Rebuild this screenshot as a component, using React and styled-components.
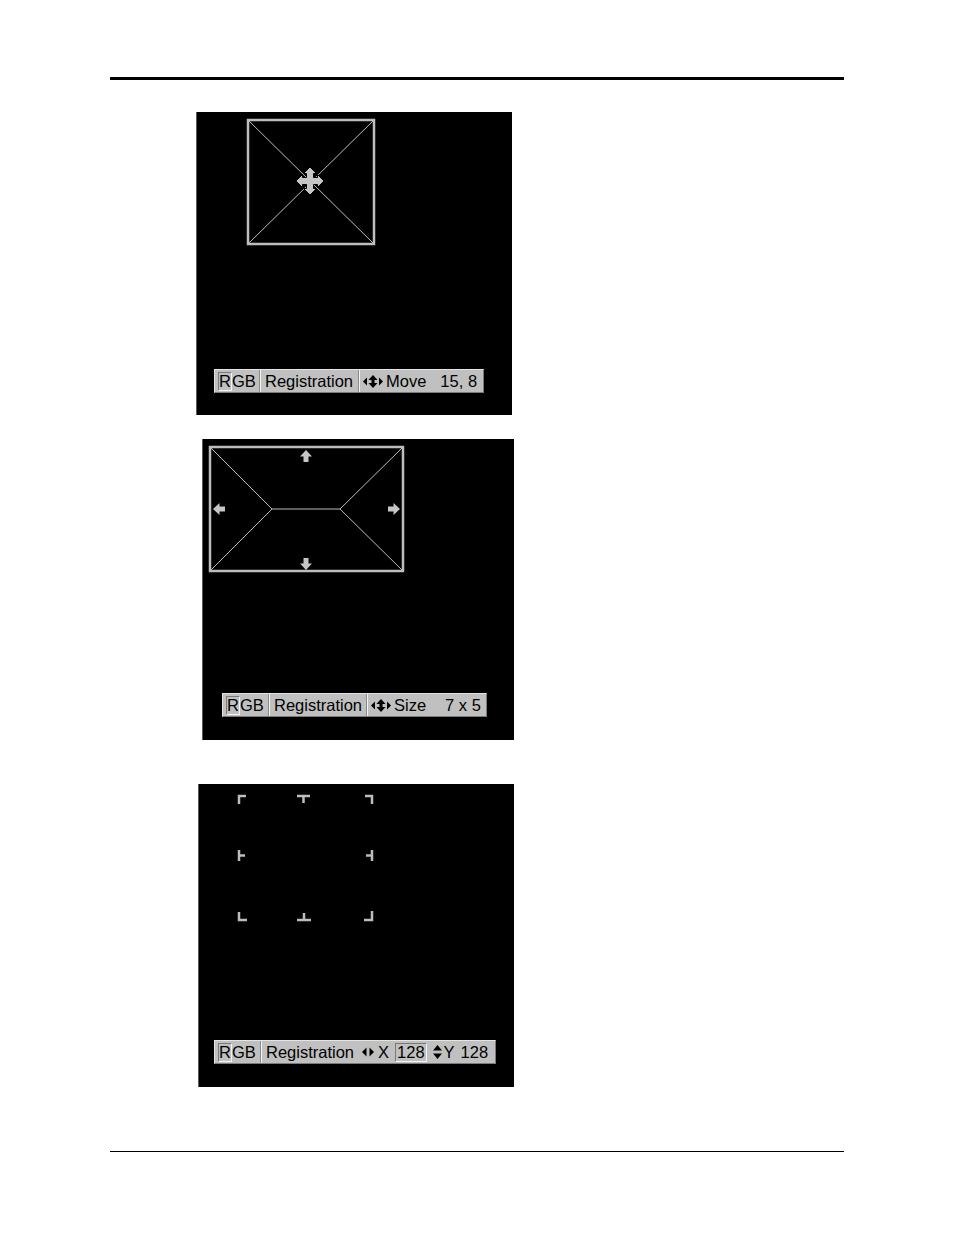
import React from "react";
import styled, { createGlobalStyle } from "styled-components";

const GlobalStyle = createGlobalStyle`
  html, body {
    margin: 0;
    padding: 0;
    background: #fff;
  }
  body {
    font-family: "Liberation Sans", Arial, sans-serif;
  }
`;

const Page = styled.div`
  width: 954px;
  min-height: 1235px;
  padding: 77px 0 0 110px;
  box-sizing: border-box;
`;

const Rule = styled.div`
  width: 734px;
  height: ${(p) => p.thick}px;
  background: #000;
  margin-top: ${(p) => p.top || 0}px;
`;

const Figures = styled.div`
  display: flex;
  flex-direction: column;
`;

const Panel = styled.div`
  width: ${(p) => p.w}px;
  height: ${(p) => p.h}px;
  margin-left: ${(p) => p.left}px;
  margin-top: ${(p) => p.top}px;
  background: #000;
  border-left: 1px solid #5a5a5a;
  box-sizing: border-box;
  display: flex;
  flex-direction: column;
`;

const Canvas = styled.svg`
  display: block;
  flex: none;
`;

const StatusBar = styled.div`
  display: flex;
  align-items: stretch;
  width: ${(p) => p.w}px;
  height: 24px;
  margin-left: ${(p) => p.left}px;
  box-sizing: border-box;
  background: #c0c0c0;
  border-top: 1px solid #e4e4e4;
  border-left: 1px solid #e4e4e4;
  border-bottom: 1px solid #7a7a7a;
  border-right: 1px solid #7a7a7a;
  font-size: 16.5px;
  color: #000;
  line-height: 1;
`;

const Cell = styled.div`
  display: flex;
  align-items: center;
  width: ${(p) => (p.w ? `${p.w}px` : "auto")};
  flex: ${(p) => (p.w ? "none" : "1")};
  padding-left: ${(p) => p.pad ?? 3}px;
  box-sizing: border-box;
  white-space: nowrap;
  border-right: ${(p) => (p.last ? "none" : "1px solid #8a8a8a")};
  box-shadow: ${(p) => (p.last ? "none" : "1px 0 0 #f4f4f4")};
  margin-right: ${(p) => (p.last ? 0 : 1)}px;
`;

const Sunken = styled.span`
  display: inline-flex;
  align-items: center;
  height: 17px;
  padding: 0 ${(p) => p.pad ?? 0}px;
  margin-left: ${(p) => p.gap || 0}px;
  border-top: 1px solid #7a7a7a;
  border-left: 1px solid #7a7a7a;
  border-bottom: 1px solid #f4f4f4;
  border-right: 1px solid #f4f4f4;
`;

const Text = styled.span`
  margin-left: ${(p) => p.gap || 0}px;
`;

const Glyph = styled.svg`
  display: block;
  flex: none;
  margin-left: ${(p) => p.gap || 0}px;
`;

const LINE = "#bdbdbd";

const ArrowsIcon = ({ gap }) => (
  <Glyph width={20} height={13} viewBox="0 0 20 13" gap={gap}>
    <polygon points="0,6.5 4,2.5 4,10.5" fill="#000" />
    <polygon points="20,6.5 16,2.5 16,10.5" fill="#000" />
    <polygon points="10,0 14.5,5 5.5,5" fill="#000" />
    <polygon points="10,13 14.5,8 5.5,8" fill="#000" />
    <rect x={8.5} y={5} width={3} height={3} fill="#000" />
  </Glyph>
);

const HArrowsIcon = ({ gap }) => (
  <Glyph width={12} height={10} viewBox="0 0 12 10" gap={gap}>
    <polygon points="0,5 4.5,0.5 4.5,9.5" fill="#000" />
    <polygon points="12,5 7.5,0.5 7.5,9.5" fill="#000" />
  </Glyph>
);

const VArrowsIcon = ({ gap }) => (
  <Glyph width={9} height={14} viewBox="0 0 9 14" gap={gap}>
    <polygon points="4.5,0 9,5.5 0,5.5" fill="#000" />
    <polygon points="4.5,14 9,8.5 0,8.5" fill="#000" />
  </Glyph>
);

const RgbCell = ({ w, pad }) => (
  <Cell w={w} pad={pad}>
    <Sunken>R</Sunken>
    <Text>GB</Text>
  </Cell>
);

const MoveCursor = ({ x, y }) => (
  <polygon
    transform={`translate(${x} ${y})`}
    points="0,-14 6.5,-7.5 3.5,-7.5 3.5,-3.5 7.5,-3.5 7.5,-6.5 14,0 7.5,6.5 7.5,3.5 3.5,3.5 3.5,7.5 6.5,7.5 0,14 -6.5,7.5 -3.5,7.5 -3.5,3.5 -7.5,3.5 -7.5,6.5 -14,0 -7.5,-6.5 -7.5,-3.5 -3.5,-3.5 -3.5,-7.5 -6.5,-7.5"
    fill="#c6c6c6"
    stroke="#000"
    strokeWidth="1"
  />
);

// small solid arrow, rotated to point up/right/down/left
const SideArrow = ({ x, y, rot }) => (
  <polygon
    transform={`translate(${x} ${y}) rotate(${rot})`}
    points="0,-6 6,0.5 2.5,0.5 2.5,6 -2.5,6 -2.5,0.5 -6,0.5"
    fill="#c6c6c6"
  />
);

const MoveFigure = () => (
  <Panel w={316} h={303} left={86} top={32}>
    <Canvas width={315} height={257}>
      <rect x={51} y={8} width={126} height={124} fill="none" stroke={LINE} strokeWidth={2.5} />
      <line x1={52} y1={9} x2={176} y2={131} stroke={LINE} strokeWidth={1} />
      <line x1={176} y1={9} x2={52} y2={131} stroke={LINE} strokeWidth={1} />
      <MoveCursor x={113} y={69} />
    </Canvas>
    <StatusBar w={270} left={17}>
      <RgbCell w={45} pad={3} />
      <Cell w={98} pad={4}>Registration</Cell>
      <Cell last pad={3}>
        <ArrowsIcon />
        <Text gap={3}>Move</Text>
        <Text gap={14}>15, 8</Text>
      </Cell>
    </StatusBar>
  </Panel>
);

const SizeFigure = () => (
  <Panel w={312} h={301} left={92} top={24}>
    <Canvas width={311} height={254}>
      <rect x={7} y={8} width={193} height={124} fill="none" stroke={LINE} strokeWidth={2.5} />
      <line x1={8} y1={9} x2={69} y2={70} stroke={LINE} strokeWidth={1} />
      <line x1={8} y1={131} x2={69} y2={70} stroke={LINE} strokeWidth={1} />
      <line x1={199} y1={9} x2={137} y2={70} stroke={LINE} strokeWidth={1} />
      <line x1={199} y1={131} x2={137} y2={70} stroke={LINE} strokeWidth={1} />
      <line x1={69} y1={70} x2={137} y2={70} stroke={LINE} strokeWidth={1} />
      <SideArrow x={103} y={17} rot={0} />
      <SideArrow x={191} y={70} rot={90} />
      <SideArrow x={103} y={125} rot={180} />
      <SideArrow x={16} y={70} rot={270} />
    </Canvas>
    <StatusBar w={265} left={19}>
      <RgbCell w={46} pad={3} />
      <Cell w={97} pad={4}>Registration</Cell>
      <Cell last pad={3}>
        <ArrowsIcon />
        <Text gap={3}>Size</Text>
        <Text gap={19}>7 x 5</Text>
      </Cell>
    </StatusBar>
  </Panel>
);

// corner/edge tick marks for the point-registration grid
const TICKS = [
  "M40 20 V12 H47",
  "M98 12 H111 M104.5 12 V19",
  "M166 12 H173 V20",
  "M40 66 V77 M40 71.5 H46",
  "M173 66 V77 M173 71.5 H167",
  "M40 128 V136 H48",
  "M98 136 H112 M105 136 V129",
  "M165 136 H173 V127",
];

const PointFigure = () => (
  <Panel w={316} h={303} left={88} top={44}>
    <Canvas width={315} height={256}>
      {TICKS.map((d, i) => (
        <path key={i} d={d} fill="none" stroke={LINE} strokeWidth={2.5} />
      ))}
    </Canvas>
    <StatusBar w={282} left={15}>
      <RgbCell w={46} pad={3} />
      <Cell last pad={4}>
        <Text>Registration</Text>
        <HArrowsIcon gap={8} />
        <Text gap={4}>X</Text>
        <Sunken pad={1} gap={6}>128</Sunken>
        <VArrowsIcon gap={6} />
        <Text gap={2}>Y</Text>
        <Text gap={6}>128</Text>
      </Cell>
    </StatusBar>
  </Panel>
);

export default function App() {
  return (
    <Page>
      <GlobalStyle />
      <Rule thick={3} />
      <Figures>
        <MoveFigure />
        <SizeFigure />
        <PointFigure />
      </Figures>
      <Rule thick={1} top={64} />
    </Page>
  );
}
